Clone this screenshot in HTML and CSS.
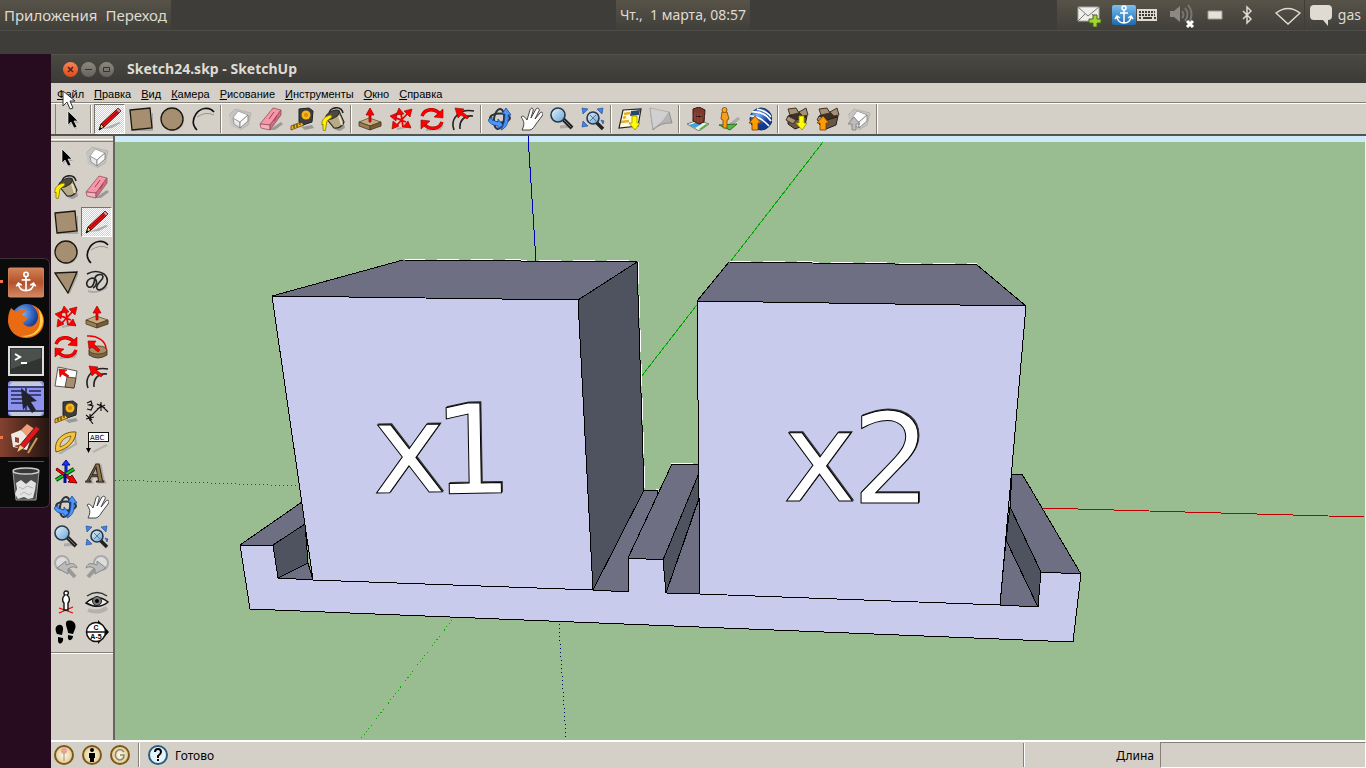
FILE: index.html
```html
<!DOCTYPE html>
<html lang="ru">
<head>
<meta charset="utf-8">
<title>Sketch24.skp - SketchUp</title>
<link rel="stylesheet" href="styles.css">
</head>
<body>
<svg class="defs" aria-hidden="true">
  <defs>
    <linearGradient id="glass" x1="0" y1="0" x2="1" y2="1"><stop offset="0" stop-color="#e4f4ff"/><stop offset="1" stop-color="#6ba3d0"/></linearGradient>
    <linearGradient id="anchorBlue" x1="0" y1="0" x2="0" y2="1"><stop offset="0" stop-color="#7bc0ee"/><stop offset="1" stop-color="#1e68ad"/></linearGradient>
    <linearGradient id="anchorOrange" x1="0" y1="0" x2="0" y2="1"><stop offset="0" stop-color="#d58256"/><stop offset=".5" stop-color="#b4522d"/><stop offset="1" stop-color="#d28a64"/></linearGradient>
    <radialGradient id="globe" cx=".35" cy=".3"><stop offset="0" stop-color="#7cb4ff"/><stop offset="1" stop-color="#123a93"/></radialGradient>
    <radialGradient id="coin"><stop offset="0" stop-color="#fffbe8"/><stop offset="1" stop-color="#dccb93"/></radialGradient>
  </defs>
  <symbol id="arrow" viewBox="0 0 24 24"><path d="M10 7l9 9h-5l3 5-2 1-3-6-3 3z" fill="#8c8a85" opacity=".6"/><path d="M8 4v14l3-3 3 6 3-1-3-6h4z" fill="#000" stroke="#fff" stroke-width=".6"/></symbol>
  <symbol id="pencil" viewBox="0 0 24 24"><path d="M4 22l17-7 2 1-9 5z" fill="#999" opacity=".7"/><path d="M1 23l2-6 3 3z" fill="#e8cf8e" stroke="#111"/><path d="M1 23l1-3 2 2z" fill="#111"/><path d="M3 17L18 3l3 3L6 20z" fill="#ee1010" stroke="#300" stroke-width=".8"/><path d="M5 18L19 5" stroke="#8e0000"/><path d="M18 3l2-2 3 3-2 2z" fill="#e77fa0" stroke="#733"/></symbol>
  <symbol id="square" viewBox="0 0 24 24"><path d="M3 23h21V6" fill="none" stroke="#aaa7a0" stroke-width="2"/><path d="M1 3l20-2 2 20-20 2z" fill="#a68f70" stroke="#1b1712" stroke-width="1.3"/></symbol>
  <symbol id="circle" viewBox="0 0 24 24"><circle cx="13" cy="13" r="11" fill="#aaa7a0"/><circle cx="12" cy="12" r="11" fill="#a68f70" stroke="#1b1712" stroke-width="1.3"/></symbol>
  <symbol id="triangle" viewBox="0 0 24 24"><path d="M15 23L24 3" stroke="#aaa7a0" stroke-width="2"/><path d="M1 3l22-1-9 21z" fill="#a68f70" stroke="#1b1712" stroke-width="1.3"/></symbol>
  <symbol id="arc" viewBox="0 0 24 24"><path d="M6 10q9-6 17-2" fill="none" stroke="#99968f"/><path d="M23 5C18-1 9 1 5 7S1 18 6 23" fill="none" stroke="#111" stroke-width="1.6"/></symbol>
  <symbol id="free" viewBox="0 0 24 24"><path d="M3 21q10 3 19-4" fill="none" stroke="#aaa" stroke-width="2"/><path d="M2 4q9-5 17 0c6 5 3 12-2 15-4 2-6 0-5-3 1-4 6-6 6-9 0-4-7-3-8 1-1 5-1 8-4 9s-5-2-4-5 5-5 8-3 1 8-2 9" fill="none" stroke="#222" stroke-width="1.6"/></symbol>
  <symbol id="cube" viewBox="0 0 24 24"><path d="M1 8l6-6 16 4-2 12-9 5-9-4z" fill="#c2c0bc" opacity=".8"/><path d="M1 8l6-6 16 4-3 12-8 5" fill="none" stroke="#b0aeaa" stroke-width=".8"/><path d="M5 11l7 4v6l-6-4z" fill="#e8e8e8" stroke="#888" stroke-width=".8"/><path d="M5 11l5-7 10 4-8 7z" fill="#fff" stroke="#999" stroke-width=".8"/><path d="M12 15l8-7v6l-8 7z" fill="#f8f8f8" stroke="#777" stroke-width=".8"/></symbol>
  <symbol id="eraser" viewBox="0 0 24 24"><path d="M10 23l12-8 2 2-8 6z" fill="#999"/><path d="M1 17L14 1l8 2-11 15z" fill="#f497a8" stroke="#97515f" stroke-width=".8"/><path d="M1 17l10 1v5L2 21z" fill="#f8b2be" stroke="#97515f" stroke-width=".8"/><path d="M11 18L22 3v5L11 23z" fill="#d06e82" stroke="#97515f" stroke-width=".8"/><path d="M10 12l5-7m0 9l3-5" stroke="#a33f55"/></symbol>
  <symbol id="tape" viewBox="0 0 24 24"><path d="M11 20l11-2 2 3-9 2z" fill="#999"/><path d="M9 2l10-1 4 3-1 11-9 3-4-3z" fill="#3c3d3c" stroke="#222"/><circle cx="16" cy="8" r="4.5" fill="#f7b518"/><circle cx="16" cy="8" r="2" fill="#d58b0b"/><path d="M11 15l-10 4v4l13-5z" fill="#f2b520" stroke="#5c400b" stroke-width=".8"/><path d="M4 18v3m3-4v3m3-5v3" stroke="#332400"/></symbol>
  <symbol id="bucket" viewBox="0 0 24 24"><path d="M14 23l9-6 1 4-5 3z" fill="#999"/><path d="M8 7C8 0 20-2 22 6" fill="none" stroke="#222" stroke-width="1.6"/><path d="M5 11L18 4l5 11c-1 4-6 7-10 6z" fill="#b7ab87" stroke="#282620" stroke-width="1.2"/><ellipse cx="11.5" cy="8" rx="7.5" ry="3.5" transform="rotate(-28 11 8)" fill="#4d4a40" stroke="#282620"/><path d="M18 9l3 9" stroke="#e8dfc2" stroke-width="2"/><path d="M10 8C4 9 0 13 1 18l1-1v6l2 1 1-4 1-6 5-4z" fill="#fff000" stroke="#827200" stroke-width=".8"/></symbol>
  <symbol id="push" viewBox="0 0 24 24"><path d="M6 22l17-2 1-4z" fill="#aaa"/><path d="M1 15l10-4 12 4-11 4z" fill="#c5ab82" stroke="#654e30" stroke-width=".8"/><path d="M1 15l11 4v4L1 19z" fill="#9b7e54" stroke="#493820" stroke-width=".8"/><path d="M12 19l11-4v4l-11 4z" fill="#765c38" stroke="#493820" stroke-width=".8"/><path d="M11 15V8H8l4-7 4 7h-3v7z" fill="#f00" stroke="#900" stroke-width=".7"/></symbol>
  <symbol id="move" viewBox="0 0 24 24"><path d="M8 22l14-3" stroke="#aaa" stroke-width="2"/><path d="M4 10l13 5M8 18l11-12M12 6l2 14M4 10l9 3" stroke="#e00" stroke-width="1.8"/><path d="M23 2l-8 2 6 6zM1 9l7-3-1 8zM3 22l1-8 6 5zM22 21l-8-1 5-6zM10 1l5 6-8 1z" fill="#f00" stroke="#900" stroke-width=".6"/></symbol>
  <symbol id="rotate" viewBox="0 0 24 24"><path d="M6 23l14-1 3-4" stroke="#aaa" stroke-width="2" fill="none"/><path d="M2 9C5 1 15 1 20 7M22 15c-3 8-13 8-18 2" stroke="#a00000" stroke-width="3.4" fill="none"/><path d="M2 9C5 1 15 1 20 7M22 15c-3 8-13 8-18 2" stroke="#f00" stroke-width="2.4" fill="none"/><path d="M23 2v9l-9-1zM1 22v-9l9 1z" fill="#f00" stroke="#900" stroke-width=".6"/></symbol>
  <symbol id="offset" viewBox="0 0 24 24"><path d="M3 23C-1 12 8 1 23 4M9 22C8 14 13 8 22 9" fill="none" stroke="#222" stroke-width="1.6"/><path d="M16 12L10 8l-3 3L4 1l9 1-2 3 7 5z" fill="#f00" stroke="#900" stroke-width=".6"/></symbol>
  <symbol id="follow" viewBox="0 0 24 24"><path d="M4 15v5q9 6 18 0v-5z" fill="#7d6541" stroke="#372a17" stroke-width=".8"/><ellipse cx="13" cy="15" rx="9" ry="4" fill="#a68d65" stroke="#493820" stroke-width=".8"/><path d="M2 1c10-1 19 5 19 13" fill="none" stroke="#e00" stroke-width="1.5"/><path d="M13 17L7 12l-3 2-1-8h8l-2 3 6 6z" fill="#f00" stroke="#900" stroke-width=".6"/></symbol>
  <symbol id="scale" viewBox="0 0 24 24"><path d="M4 2l19 4-3 17L1 21z" fill="#fff" stroke="#333" stroke-width=".8"/><path d="M13 12l9 1-2 10-9-1z" fill="#a68f70" stroke="#333" stroke-width=".8"/><path d="M13 12l-5-3-2 3-1-8 8 1-3 2 5 4z" fill="#f00" stroke="#900" stroke-width=".6"/></symbol>
  <symbol id="dimension" viewBox="0 0 24 24"><path d="M3 17l5 7M15 4l8 8M4 18L16 6M1 15l6 5M5 14v7M1 19l8-2M12 4l8 4M16 2v9M12 9l8-4" stroke="#111" stroke-width="1.1"/><path d="M2 3l4-2 1 3-3 1 4 1-2 4-4-1" fill="none" stroke="#111" stroke-width="1.2"/></symbol>
  <symbol id="protractor" viewBox="0 0 24 24"><path d="M5 24l17-10-1-8" stroke="#aaa" stroke-width="2" fill="none"/><path d="M2 22C-1 10 10 1 22 2c0 8-7 17-20 20z" fill="#f5c438" stroke="#6e540e"/><path d="M6 17C6 11 11 7 17 6c-1 5-5 9-11 11z" fill="#d4d0c8" stroke="#6e540e" stroke-width=".8"/></symbol>
  <symbol id="axes" viewBox="0 0 24 24"><path d="M11 14V5H8l4-5 4 5h-3v9z" fill="#1733ff" stroke="#001285"/><path d="M2 20L20 9" stroke="#104810" stroke-width="4"/><path d="M2 20L20 9" stroke="#15ca28" stroke-width="2"/><path d="M3 8l13 9 2-2 5 8-9-1 2-2L2 10z" fill="#f00" stroke="#700"/><path d="M11 14v9" stroke="#001285" stroke-width="3"/></symbol>
  <symbol id="orbit" viewBox="0 0 24 24"><ellipse cx="12" cy="11" rx="10" ry="4.5" fill="none" stroke="#29313b" stroke-width="2"/><ellipse cx="11" cy="12" rx="5" ry="10" transform="rotate(8 11 12)" fill="none" stroke="#29313b" stroke-width="2"/><path d="M0 13l4-3v3l6 2v-3l5 6-5 4v-3q-8-1-10-6zM14 7l4-6 5 7h-3c1 8-2 13-7 15 3-5 4-10 4-16z" fill="#4b95ff" stroke="#174895" stroke-width=".8"/></symbol>
  <symbol id="hand" viewBox="0 0 24 24"><path d="M3 23C6 17 5 14 2 10c2-2 4 0 6 3L11 3c1-3 4-2 3 1l-2 7 5-9c2-2 4 0 3 2l-4 8 5-6c2-2 4 0 2 3l-6 8c-2 3-3 5-6 6z" fill="#fff" stroke="#333" stroke-width=".9"/></symbol>
  <symbol id="lens" viewBox="0 0 24 24"><path d="M10 20l12-1" stroke="#aaa" stroke-width="3"/><path d="M13 12l9 9" stroke="#222" stroke-width="4"/><path d="M14 13l7 7" stroke="#777"/><circle cx="8" cy="8" r="7" fill="url(#glass)" stroke="#26384b" stroke-width="1.6"/></symbol>
  <symbol id="extents" viewBox="0 0 24 24"><path d="M15 15l7 7" stroke="#222" stroke-width="3.6"/><circle cx="12" cy="11" r="6" fill="url(#glass)" stroke="#26384b" stroke-width="1.6"/><path d="M9 8l6 6m0-6l-6 6" stroke="#59799b"/><path d="M1 1l6 1-5 5zM22 1l-6 1 5 5zM1 20l1-6 5 5zM23 14l-3-1 2 4z" fill="#3e82ed" stroke="#174895" stroke-width=".6"/></symbol>
  <symbol id="previous" viewBox="0 0 24 24"><path d="M13 13l8 9" stroke="#999" stroke-width="4"/><circle cx="8" cy="8" r="7" fill="#ddd" stroke="#aaa" stroke-width="2"/><path d="M3 13l9-7v4c7-3 10-1 11 3-4-2-6-1-9 1v5z" fill="#bbb" stroke="#888"/></symbol>
  <symbol id="next" viewBox="0 0 24 24"><path d="M11 13l-8 9" stroke="#999" stroke-width="4"/><circle cx="16" cy="8" r="7" fill="#ddd" stroke="#aaa" stroke-width="2"/><path d="M21 13l-9-7v4C5 7 2 9 1 13c4-2 6-1 9 1v5z" fill="#bbb" stroke="#888"/></symbol>
  <symbol id="person" viewBox="0 0 24 24"><path d="M5 23l14-6M5 18l14 5" stroke="#e00" stroke-width="1.3"/><path d="M12 1c3 0 3 3 1 4 3 2 3 6 1 8v7h-4v-7c-2-2-2-6 1-8-2-1-1-4 1-4z" fill="#fff" stroke="#111" stroke-width="1.4"/></symbol>
  <symbol id="eye" viewBox="0 0 24 24"><path d="M3 20q10 4 19-2" stroke="#b5b2ab" stroke-width="4" fill="none"/><path d="M2 6Q12-1 22 6" fill="none" stroke="#333" stroke-width="1.5"/><path d="M1 13Q12 3 23 12q-9 8-22 1z" fill="#eee" stroke="#111" stroke-width="1.5"/><circle cx="12" cy="11" r="4.5" fill="#777" stroke="#222"/><circle cx="12" cy="11" r="2"/></symbol>
  <symbol id="feet" viewBox="0 0 24 24"><path d="M2 7c3-4 8-2 7 3l-1 5-5-1C2 12 1 9 2 7zM4 17l5 1c1 5-4 8-5 3zM13 1c6-2 10 3 8 8l-2 5-5-1c0-4-4-9-1-12zM14 15l5 1c0 5-6 6-5 0z"/></symbol>
  <symbol id="down" viewBox="0 0 24 24"><path d="M14 9h5v7h3l-5 7-6-7h3z" fill="#ff0" stroke="#a08c00" stroke-width=".8"/></symbol>
  <symbol id="up" viewBox="0 0 24 24"><path d="M4 23v-7H1l6-7 6 7h-3v7z" fill="#ff9b05" stroke="#704000" stroke-width=".8"/></symbol>
  <symbol id="getmap" viewBox="0 0 24 24"><path d="M5 3l18-1-3 17-19 2z" fill="#fffbe4" stroke="#222" stroke-width="1.2"/><path d="M13 4l9-1-1 5-9 1z" fill="#26486f"/><path d="M6 7l6-1M3 15l8-1M5 11l3-1" stroke="#e4af23" stroke-width="2.5"/><use href="#down"/></symbol>
  <symbol id="terrain" viewBox="0 0 24 24"><path d="M1 1q8 6 19 4l3 11q-11-1-19 7z" fill="#b5b5b5" stroke="#909090"/><path d="M1 1l3 21 10-8 6-9z" fill="#d0d0d0" stroke="#aaa" stroke-width=".8"/></symbol>
  <symbol id="building" viewBox="0 0 24 24"><path d="M1 17l11-4 11 4-10 7z" fill="#f1efe1" stroke="#777"/><path d="M3 18l9-3 4 2-7 4z" fill="#39a7de"/><path d="M13 22l7-5 2 1-8 5z" fill="#53b149"/><path d="M7 2l6-2 6 3-1 12-5 2-6-3z" fill="#7e3929" stroke="#391510"/><path d="M9 5v9m3-8v10m3-10v9M7 9l6 2 6-2" stroke="#9a5142" stroke-width=".8"/></symbol>
  <symbol id="street" viewBox="0 0 24 24"><path d="M9 21L22 11" stroke="#aaa" stroke-width="3"/><path d="M2 18l18-1-7 6z" fill="#55b646" stroke="#28711d"/><path d="M5 5h5l2 7-2 1v8H6v-8l-2-1z" fill="#f6a019" stroke="#93530c"/><circle cx="7.5" cy="3" r="2.5" fill="#f3ad35" stroke="#93530c"/></symbol>
  <symbol id="earth" viewBox="0 0 24 24"><circle cx="13" cy="12" r="11" fill="url(#globe)" stroke="#123060"/><path d="M2 9q10 0 19 10M4 5q12-1 19 9M9 2q10 2 14 8" stroke="#fff" stroke-width="1.6" fill="none"/><use href="#up"/></symbol>
  <symbol id="box" viewBox="0 0 24 24"><path d="M3 9l11-4 8 4-2 9-10 4-7-5z" fill="#685745" stroke="#251d16"/><path d="M4 9l7 4 10-3-7-5z" fill="#3a3028" stroke="#251d16"/><path d="M5 8L3 2l8-1 3 5zM14 5l7-4 2 7-5 1zM3 9l-2 4 7 4 3-4z" fill="#a89072" stroke="#40352a"/></symbol>
  <symbol id="download" viewBox="0 0 24 24"><use href="#box"/><use href="#down"/></symbol>
  <symbol id="upload" viewBox="0 0 24 24"><use href="#box"/><use href="#up"/></symbol>
  <symbol id="share" viewBox="0 0 24 24"><use href="#cube"/><path d="M5 23v-6H1l6-7 6 7H9v6z" fill="#bcbcbc" stroke="#8a8a8a"/></symbol>
  <symbol id="anchor" viewBox="0 0 24 24"><g fill="none" stroke="#fff" stroke-width="1.5"><circle cx="12" cy="5" r="2"/><path d="M12 7v13M8 10h8M5 14q1 6 7 6t7-6M3 16l2-3 3 2M21 16l-2-3-3 2"/></g></symbol>
</svg>

<header class="panel">
  <nav class="panel-menu"><button type="button">Приложения</button><button type="button">Переход</button></nav>
  <div class="clock">Чт.,&nbsp; 1 марта, 08:57</div>
  <div class="tray">
    <svg width="24" height="24" viewBox="0 0 24 24"><path d="M1 4h21v14H1z" fill="#efeeeb" stroke="#aaa9a3"/><path d="M1 4l10 9L22 4M1 18l7-7m14 7l-7-7" fill="none" stroke="#777"/><path d="M16 12h4v4h4v4h-4v4h-4v-4h-4v-4h4z" fill="#a3d337" stroke="#466912"/></svg>
    <span class="layout"><svg width="24" height="24" viewBox="0 0 24 24"><rect width="24" height="20" y="2" rx="2" fill="url(#anchorBlue)"/><use href="#anchor"/></svg><svg width="22" height="24" viewBox="0 0 22 24"><rect x="1" y="6" width="20" height="12" fill="#dfdbd2"/><path d="M3 9h16M3 12h16" stroke="#3c3b37" stroke-width="2" stroke-dasharray="2 1"/><path d="M3 15h2m2 0h9m2 0h2" stroke="#3c3b37" stroke-width="2"/></svg></span>
    <svg width="26" height="26" viewBox="0 0 26 26"><path d="M1 9h4l6-5v16l-6-5H1z" fill="#8b8982"/><path d="M13 9q3 4 0 7m3-10q5 6 0 13m3-16q7 9 0 19" fill="none" stroke="#77756e" stroke-width="2"/><path d="M18 19l6 6m0-6l-6 6" stroke="#fff" stroke-width="3"/></svg>
    <svg width="18" height="24" viewBox="0 0 18 24"><path d="M2 8h14v8H2z" fill="#e5e1d8" stroke="#9b9991"/></svg>
    <svg class="bluetooth" width="14" height="24" viewBox="0 0 14 24"><path d="M3 8l8 8-4 4V4l4 4-8 8" fill="none" stroke="#dfdbd2" stroke-width="1.5"/></svg>
    <svg class="wifi" width="26" height="24" viewBox="0 0 26 24"><path d="M1 10q12-9 24 0L13 21z" fill="none" stroke="#dfdbd2" stroke-width="1.5"/></svg>
    <span class="user"><svg width="24" height="24" viewBox="0 0 24 24"><path d="M5 2h14q4 0 4 4v7q0 4-4 4v6l-5-6H5q-4 0-4-4V6q0-4 4-4z" fill="#dfdbd2"/></svg>gas</span>
  </div>
</header>
<div class="strip"></div>

<div class="desktop">
  <nav class="launcher" aria-label="Launcher">
    <button type="button" class="running" aria-label="Dock"><svg width="36" height="36" viewBox="0 0 36 36"><rect y="4" width="36" height="29" rx="2" fill="url(#anchorOrange)" stroke="#ce8b66"/><use href="#anchor" x="5" y="5" width="26" height="26"/></svg></button>
    <button type="button" aria-label="Firefox"><svg width="36" height="36" viewBox="0 0 36 36"><circle cx="19" cy="17" r="16" fill="url(#globe)"/><path d="M3 5l5 4q5-4 10-2l-4 5 6 3-5 5c4 6 12 4 14-2 3-6-1-13-6-16 8 1 13 9 13 16C36 28 28 35 18 35S1 28 0 19c0-7 1-10 3-14z" fill="#e96c13"/><path d="M30 5q9 12 2 22-8 9-19 6 18 0 19-15 0-8-2-13z" fill="#ffd04a"/></svg></button>
    <button type="button" aria-label="Terminal"><svg width="36" height="36" viewBox="0 0 36 36"><rect x="1" y="5" width="34" height="28" fill="#303531" stroke="#ddd" stroke-width="2"/><path d="M3 7h30v9L3 27z" fill="#4c504d"/><path d="M7 12l5 3-5 3m6 3h6" fill="none" stroke="#fff" stroke-width="2"/></svg></button>
    <button type="button" aria-label="Windows"><svg width="36" height="36" viewBox="0 0 36 36"><rect width="36" height="35" rx="3" fill="#8c91ed"/><path d="M4 1h28l3 4H1zM1 31h34l-3 4H4z" fill="#c5c9dd"/><path d="M0 6h36M0 30h36M18 7v22M3 10h12M3 14h12M3 18h12M3 22h12M21 10h12M21 14h12" stroke="#222652" stroke-width="1.5"/><path d="M13 7l16 13-6 1 5 8-4 3-5-8-4 5z" fill="#22222d"/></svg></button>
    <button type="button" class="running current" aria-label="SketchUp"><svg width="36" height="36" viewBox="0 0 36 36"><path d="M3 14l10-4 10 8-4 12L5 27z" fill="#eee9e2"/><path d="M13 10l6-6 9 6-6 10z" fill="#efa079"/><path d="M7 17l4 1v5l-4-1zM6 26l7-2v5" fill="#8c442e"/><path d="M9 32l3-7 16-19 4 3-16 19z" fill="#dd171b" stroke="#591c16"/><path d="M9 32l3-7 4 3z" fill="#efcf88"/><path d="M20 33l9-15" stroke="#c99d5c" stroke-width="2"/></svg></button>
    <hr>
    <button type="button" aria-label="Trash"><svg width="36" height="36" viewBox="0 0 36 36"><path d="M5 5h26l-3 28H8z" fill="#4b4b4b" stroke="#999"/><ellipse cx="18" cy="4" rx="13" ry="3" fill="#383838" stroke="#ccc" stroke-width="1.5"/><path d="M8 16l5-3 5 4 5-4 5 3-1 7-2 8-5 1-4-2-6 2-3-5 2-5z" fill="#e2e2e2"/><path d="M11 20l4 2 4-3 6 2M12 28l4-3 5 3 3-2" fill="none" stroke="#b5b5b5"/></svg></button>
  </nav>

  <main class="window">
    <div class="titlebar">
      <button type="button" class="orb close" aria-label="Закрыть"><svg width="15" height="15" viewBox="0 0 15 15"><path d="M5 5l5 5m0-5l-5 5" stroke="#4b2417" stroke-width="1.5"/></svg></button>
      <button type="button" class="orb" aria-label="Свернуть"><svg width="15" height="15" viewBox="0 0 15 15"><path d="M4 7.5h7" stroke="#333"/></svg></button>
      <button type="button" class="orb" aria-label="Развернуть"><svg width="15" height="15" viewBox="0 0 15 15"><path d="M4.5 5.5h6v4h-6z" fill="none" stroke="#333"/></svg></button>
      <h1>Sketch24.skp - SketchUp</h1>
    </div>
    <nav class="menubar">
      <button type="button"><u>Ф</u>айл</button><button type="button"><u>П</u>равка</button><button type="button"><u>В</u>ид</button><button type="button"><u>К</u>амера</button><button type="button"><u>Р</u>исование</button><button type="button"><u>И</u>нструменты</button><button type="button"><u>О</u>кно</button><button type="button"><u>С</u>правка</button>
      <svg class="pointer" width="14" height="20" viewBox="0 0 14 20" aria-hidden="true"><path d="M1 1v15l4-4 3 7 3-1-3-7h5z" fill="#fff" stroke="#333"/></svg>
    </nav>
    <div class="toolbar">
      <button type="button" class="tool first" aria-label="Выбрать"><svg><use href="#arrow"/></svg></button><i class="sep"></i>
      <button type="button" class="tool active" aria-label="Линия"><svg><use href="#pencil"/></svg></button><button type="button" class="tool" aria-label="Прямоугольник"><svg><use href="#square"/></svg></button><button type="button" class="tool" aria-label="Круг"><svg><use href="#circle"/></svg></button><button type="button" class="tool" aria-label="Дуга"><svg><use href="#arc"/></svg></button><i class="sep"></i>
      <button type="button" class="tool" aria-label="Компонент"><svg><use href="#cube"/></svg></button><button type="button" class="tool" aria-label="Ластик"><svg><use href="#eraser"/></svg></button><button type="button" class="tool" aria-label="Рулетка"><svg><use href="#tape"/></svg></button><button type="button" class="tool" aria-label="Заливка"><svg><use href="#bucket"/></svg></button><i class="sep"></i>
      <button type="button" class="tool" aria-label="Вытянуть"><svg><use href="#push"/></svg></button><button type="button" class="tool" aria-label="Переместить"><svg><use href="#move"/></svg></button><button type="button" class="tool" aria-label="Повернуть"><svg><use href="#rotate"/></svg></button><button type="button" class="tool" aria-label="Смещение"><svg><use href="#offset"/></svg></button><i class="sep"></i>
      <button type="button" class="tool" aria-label="Орбита"><svg><use href="#orbit"/></svg></button><button type="button" class="tool" aria-label="Панорама"><svg><use href="#hand"/></svg></button><button type="button" class="tool" aria-label="Масштаб"><svg><use href="#lens"/></svg></button><button type="button" class="tool" aria-label="Показать все"><svg><use href="#extents"/></svg></button><i class="sep"></i>
      <button type="button" class="tool" aria-label="Добавить место"><svg><use href="#getmap"/></svg></button><button type="button" class="tool" aria-label="Рельеф"><svg><use href="#terrain"/></svg></button><i class="sep"></i>
      <button type="button" class="tool" aria-label="Здание"><svg><use href="#building"/></svg></button><button type="button" class="tool" aria-label="Текстуры"><svg><use href="#street"/></svg></button><button type="button" class="tool" aria-label="Google Earth"><svg><use href="#earth"/></svg></button><i class="sep"></i>
      <button type="button" class="tool" aria-label="Получить модели"><svg><use href="#download"/></svg></button><button type="button" class="tool" aria-label="Опубликовать модель"><svg><use href="#upload"/></svg></button><button type="button" class="tool" aria-label="Опубликовать компонент"><svg><use href="#share"/></svg></button><i class="sep end"></i>
    </div>
    <div class="workspace">
      <aside class="palette">
        <div class="tools">
          <button type="button" class="tool" aria-label="Выбрать"><svg><use href="#arrow"/></svg></button><button type="button" class="tool" aria-label="Компонент"><svg><use href="#cube"/></svg></button>
          <button type="button" class="tool" aria-label="Заливка"><svg><use href="#bucket"/></svg></button><button type="button" class="tool" aria-label="Ластик"><svg><use href="#eraser"/></svg></button>
        </div>
        <div class="tools">
          <button type="button" class="tool" aria-label="Прямоугольник"><svg><use href="#square"/></svg></button><button type="button" class="tool active" aria-label="Линия"><svg><use href="#pencil"/></svg></button>
          <button type="button" class="tool" aria-label="Круг"><svg><use href="#circle"/></svg></button><button type="button" class="tool" aria-label="Дуга"><svg><use href="#arc"/></svg></button>
          <button type="button" class="tool" aria-label="Многоугольник"><svg><use href="#triangle"/></svg></button><button type="button" class="tool" aria-label="От руки"><svg><use href="#free"/></svg></button>
        </div>
        <div class="tools">
          <button type="button" class="tool" aria-label="Переместить"><svg><use href="#move"/></svg></button><button type="button" class="tool" aria-label="Вытянуть"><svg><use href="#push"/></svg></button>
          <button type="button" class="tool" aria-label="Повернуть"><svg><use href="#rotate"/></svg></button><button type="button" class="tool" aria-label="Ведение"><svg><use href="#follow"/></svg></button>
          <button type="button" class="tool" aria-label="Размер"><svg><use href="#scale"/></svg></button><button type="button" class="tool" aria-label="Смещение"><svg><use href="#offset"/></svg></button>
        </div>
        <div class="tools">
          <button type="button" class="tool" aria-label="Рулетка"><svg><use href="#tape"/></svg></button><button type="button" class="tool" aria-label="Размеры"><svg><use href="#dimension"/></svg></button>
          <button type="button" class="tool" aria-label="Транспортир"><svg><use href="#protractor"/></svg></button><button type="button" class="tool" aria-label="Текст"><svg viewBox="0 0 24 24"><path d="M8 22l14-7" stroke="#b5b2ab" stroke-width="2"/><path d="M3.5 3v17" stroke="#111"/><path d="M1 18l2.500 5L6 18z"/><rect x="3.5" y="2.5" width="20" height="9" fill="#fff" stroke="#111"/><text class="abc" x="5" y="10">ABC</text></svg></button>
          <button type="button" class="tool" aria-label="Оси"><svg><use href="#axes"/></svg></button><button type="button" class="tool" aria-label="3D текст"><svg class="letter" viewBox="0 0 24 24"><text class="serif-a" x="2" y="22">A</text></svg></button>
        </div>
        <div class="tools">
          <button type="button" class="tool" aria-label="Орбита"><svg><use href="#orbit"/></svg></button><button type="button" class="tool" aria-label="Панорама"><svg><use href="#hand"/></svg></button>
          <button type="button" class="tool" aria-label="Масштаб"><svg><use href="#lens"/></svg></button><button type="button" class="tool" aria-label="Показать все"><svg><use href="#extents"/></svg></button>
          <button type="button" class="tool" aria-label="Назад"><svg><use href="#previous"/></svg></button><button type="button" class="tool" aria-label="Вперед"><svg><use href="#next"/></svg></button>
        </div>
        <div class="tools">
          <button type="button" class="tool" aria-label="Камера"><svg><use href="#person"/></svg></button><button type="button" class="tool" aria-label="Осмотреться"><svg><use href="#eye"/></svg></button>
          <button type="button" class="tool" aria-label="Прогулка"><svg><use href="#feet"/></svg></button><button type="button" class="tool" aria-label="Сечение"><svg viewBox="0 0 24 24"><path d="M13 0l11 12-11 12z"/><circle cx="11" cy="12" r="9.5" fill="#fff" stroke="#111" stroke-width="1.5"/><path d="M1 12h20" stroke="#111" stroke-width="1.5"/><text class="mark" x="11" y="10">C</text><text class="mark" x="11" y="19">A-5</text></svg></button>
        </div>
      </aside>
      <div class="canvas">
        <svg viewBox="115 136 1250 604" preserveAspectRatio="xMinYMin slice" shape-rendering="crispEdges">
          <rect x="115" y="136" width="1250" height="604" fill="#9abc91"/>
          <rect x="115" y="136" width="1250" height="6" fill="#cdeafa"/>
          <g fill="none">
            <path d="M528 136l8 125" stroke="#0000b4"/><path d="M559 624l7 116" stroke="#000050" stroke-dasharray="1 3"/>
            <path d="M823 142L641 377" stroke="#00aa00"/><path d="M452 620l-92 120" stroke="#00aa00" stroke-dasharray="1 3"/>
            <path d="M1042 508l322 9" stroke="#c00000"/><path d="M115 480l186 6" stroke="#6a3434" stroke-dasharray="1 3"/>
          </g>
          <path d="M403 259l234 2M729 261l248 3M638 262l7 227h14M671 463h27" fill="none" stroke="#fff" stroke-dasharray="22 12"/>
          <g stroke="#000" stroke-linejoin="bevel">
            <g fill="#6e6f82">
              <path d="M240 545l62-43 3 22-32 21z"/><path d="M278 578l30-15 5 17z"/>
              <path d="M593 590l51-100h14l-7 70-23 32z"/><path d="M628 558l44-94h27v9l-36 87z"/>
              <path d="M666 593l34-97v98z"/><path d="M1012 474h10l59 100-40-2-31-65z"/><path d="M1006 540l32 67-38-2z"/>
            </g>
            <g fill="#4f5360"><path d="M273 545l32-21 3 39-30 15z"/><path d="M663 560l36-87v25l-33 95z"/><path d="M1010 507l31 65-3 35-32-67z"/></g>
            <path fill="#c8cbec" d="M240 545h33l5 33 35 2 280 10 35 2v-34l35 2 3 33 34 1 300 11 38 2 3-35 40 2-8 68-823-33z"/>
            <path fill="#6e6f82" d="M272 296l131-36 234 2-59 38zM697 301l32-39 248 3 49 41z"/>
            <path fill="#4f5360" d="M578 300l59-38 7 228-51 100z"/>
            <path d="M272 296l306 4 15 290-280-10zM697 301l329 5-26 299-300-11z" fill="#c8cbec"/>
          </g>
          <g class="solid" shape-rendering="auto">
            <text x="373 434" y="493 494" rotate="-1 -1">x1</text><text x="783 852" y="501 503">x2</text>
          </g>
        </svg>
      </div>
    </div>
    <footer class="status">
      <button type="button" class="badge" aria-label="Геопривязка"><svg width="22" height="22" viewBox="0 0 22 22"><circle cx="11" cy="11" r="9" fill="url(#coin)" stroke="#7f5717" stroke-width="2"/><circle cx="11" cy="7" r="3" fill="#e8a09a"/><path d="M11 10v7" stroke="#b2846c"/></svg></button>
      <button type="button" class="badge" aria-label="Автор"><svg width="22" height="22" viewBox="0 0 22 22"><circle cx="11" cy="11" r="9" fill="url(#coin)" stroke="#7f5717" stroke-width="2"/><circle cx="11" cy="6" r="2"/><path d="M8 9h6v5h-1v4H9v-4H8z"/></svg></button>
      <button type="button" class="badge" aria-label="Войти"><svg width="22" height="22" viewBox="0 0 22 22"><circle cx="11" cy="11" r="9" fill="url(#coin)" stroke="#7f5717" stroke-width="2"/><path d="M15 8q-4-5-8 0-2 6 3 8 5 0 5-5h-4" fill="none" stroke="#8b8675" stroke-width="1.5"/></svg></button>
      <i class="sep"></i>
      <button type="button" class="badge" aria-label="Справка"><svg width="22" height="22" viewBox="0 0 22 22"><circle cx="11" cy="11" r="9" fill="#e7f3fb" stroke="#285d83" stroke-width="2"/><path d="M8 8q0-3 3-3t3 3q0 2-3 4v2m0 1v2" fill="none" stroke="#000" stroke-width="2"/></svg></button>
      <span class="hint">Готово</span>
      <i class="sep"></i>
      <label for="length">Длина</label><input id="length" type="text">
    </footer>
  </main>
</div>
</body>
</html>
```
FILE: styles.css
```css
* { box-sizing: border-box; }
html, body { height: 100%; }
body { margin: 0; display: flex; flex-direction: column; overflow: hidden; background: #2c0e22; font-family: "Noto Sans", "Open Sans", sans-serif; }
button { margin: 0; padding: 0; border: 0; background: none; color: inherit; font: inherit; }
svg { display: block; flex: none; }
.defs { position: absolute; width: 0; height: 0; }

.panel { display: grid; grid-template-columns: 1fr auto 1fr; height: 30px; flex: none; background: #3e3d39; color: #dfdbd2; font-size: 14px; line-height: 30px; }
.panel-menu { display: flex; gap: 8px; justify-self: start; padding: 0 4px; background: linear-gradient(#575349, #403f3a); font-size: 15px; }
.clock { padding: 0 4px; background: linear-gradient(#575349, #403f3a); }
.tray { display: flex; align-items: center; justify-self: end; gap: 11px; padding: 0 5px 0 20px; background: linear-gradient(#575349, #403f3a); }
.layout, .user { display: flex; align-items: center; }
.bluetooth { margin-left: 5px; }
.wifi { margin-left: 10px; }
.user { gap: 5px; margin-left: -8px; padding-left: 4px; border-left: 1px solid #3e3d39; }
.strip { height: 24px; flex: none; border-top: 1px solid #504e49; background: #3e3d39; }

.desktop { flex: 1; min-height: 0; display: flex; background: linear-gradient(90deg, #270b1e, #351128); }
.launcher { width: 50px; flex: none; align-self: flex-start; margin: 204px 1px 0 0; padding: 3px 0; display: flex; flex-direction: column; border: 1px solid #3c3339; border-left: 0; border-radius: 0 6px 6px 0; background: #0c0b0c; }
.launcher button { height: 39px; padding-left: 8px; display: flex; align-items: center; }
.launcher .running { background: linear-gradient(#ef7748, #ef7748) 0 50% / 3px 3px no-repeat; }
.launcher .current { background: linear-gradient(#ef7748, #ef7748) 0 50% / 3px 3px no-repeat, linear-gradient(90deg, #85422f, #241512); }
.launcher hr { width: 36px; margin: 4px 0 3px 8px; border: 0; border-top: 1px solid #555; }

.window { flex: 1; min-width: 0; display: flex; flex-direction: column; background: #d4d0c8; color: #000; }
.titlebar { height: 29px; flex: none; display: flex; align-items: center; gap: 3px; padding-left: 12px; border-top: 1px solid #55534e; background: linear-gradient(#4a4843, #3b3a36); color: #dfdbd2; }
.orb { width: 15px; height: 15px; border-radius: 8px; background: linear-gradient(#8c8981, #65625c); }
.orb.close { background: linear-gradient(#f98457, #de4a18); }
.titlebar h1 { margin: 0 0 0 10px; font-size: 14px; line-height: 20px; font-weight: bold; }
.menubar { position: relative; height: 20px; flex: none; display: flex; gap: 10px; padding: 0 6px; border-bottom: 1px solid #858178; font-family: "Liberation Sans", sans-serif; font-size: 11px; line-height: 22px; }
.pointer { position: absolute; left: 11px; top: 7px; z-index: 1; }
.toolbar { height: 33px; flex: none; display: flex; padding-left: 4px; border-top: 1px solid #fff; border-bottom: 2px solid #55534f; }
.tool { width: 31px; height: 30px; flex: none; display: flex; align-items: center; justify-content: center; }
.tool svg { width: 24px; height: 24px; }
.tool.first { width: 33px; border-left: 1px solid #858178; }
.active { border: 1px solid; border-color: #77746d #fff #fff #77746d; background: repeating-conic-gradient(#d4d0c8 0 25%, #fff 0 50%) 0 0 / 2px 2px; }
.sep { width: 6px; flex: none; align-self: stretch; margin: 1px 0; background: linear-gradient(90deg, transparent 2px, #858178 2px 3px, #fff 3px 4px, transparent 4px); }
.sep.end { margin: 0; }

.workspace { flex: 1; min-height: 0; display: flex; }
.palette { width: 64px; flex: none; align-self: stretch; display: flex; flex-direction: column; gap: 5px; padding-top: 6px; border-right: 2px solid #66635e; background: linear-gradient(#fff, #fff) 0 3px / 100% 1px no-repeat, linear-gradient(#858178, #858178) 0 5px / 100% 1px no-repeat; }
.tools { display: grid; grid-template-columns: 30px 31px; }
.tools .tool { width: auto; }
.tools:last-child { padding-bottom: 6px; border-bottom: 1px solid #fff; box-shadow: 0 -1px #858178 inset; }
.abc { font: 7px "DejaVu Sans", sans-serif; }
.mark { font: bold 7px "Liberation Sans", sans-serif; text-anchor: middle; }
.letter { overflow: visible; }
.serif-a { font: italic bold 27px "Liberation Serif", serif; fill: #94764c; stroke: #2a2116; filter: drop-shadow(2px 1px 0 #aaa7a0); }
.canvas { flex: 1; min-width: 0; overflow: hidden; border-right: 1px solid #f2f0ec; }
.canvas svg { width: 100%; height: 100%; }
.solid { font-family: "DejaVu Sans", sans-serif; font-size: 124px; fill: #fff; stroke: #000; stroke-width: 1px; filter: drop-shadow(1px -1px 0 #333); }

.status { height: 28px; flex: none; display: flex; align-items: center; gap: 6px; padding-left: 2px; border-top: 2px solid #fff; font-size: 12px; }
.status .sep { width: 4px; background: linear-gradient(90deg, transparent 1px, #858178 1px 2px, #fff 2px 3px, transparent 3px); }
.hint { flex: 1; }
.status label { width: 122px; text-align: right; }
.status input { width: 206px; align-self: stretch; padding: 0 4px; border: 1px solid; border-color: #858178 #fff #fff #858178; background: #d4d0c8; font: inherit; }
```
